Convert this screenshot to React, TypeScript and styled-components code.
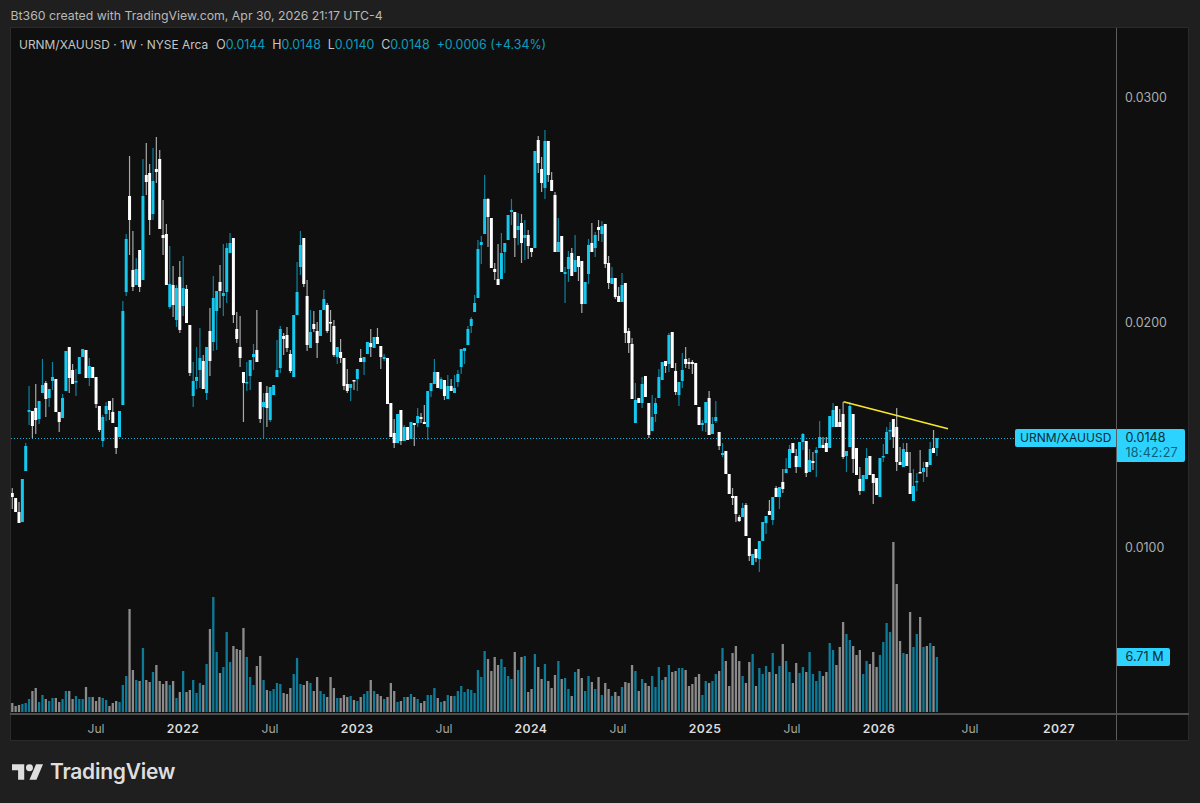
import React, { FC } from 'react';
import styled, { createGlobalStyle } from 'styled-components';

// up flag, body top, body bottom, wick top, wick bottom (page pixels)
type Candle = [number, number, number, number?, number?];

const CANDLES: Candle[] = [
  [0,493,497,488,509],[0,498,512],[0,512,523,502],[1,479,522],[1,446,471,443],
  [1,410,412,386,425],[0,411,426,411,438],[0,408,420,384,434],[1,401,419,401,424],[1,385,393,359],
  [0,383,399,381,417],[1,389,398,389,407],[1,377,381,362,390],[0,379,412],[0,412,422,412,432],
  [1,398,418,394],[1,351,391],[0,347,378,347,393],[0,370,384,364],[1,381,382,369,396],
  [1,357,374],[1,349,357],[0,350,378],[1,366,378,358,386],[0,367,378],[0,377,404,377,408],[0,406,430,406,432],
  [1,417,441,415,447],[1,406,414,402,421],[0,401,410,401,420],[0,412,423,398],[0,427,448,427,454],[1,411,437],
  [1,311,405,301],[1,239,292,234,296],[0,196,220,156,255],[0,270,287,231,291],[1,269,285,258],[0,250,287,250,292],
  [1,196,280,159],[0,175,182,143,195],[0,173,220,164,235],[1,181,214,148,220],[0,169,172,137,183],[0,159,229,150],
  [0,235,238,200,255],[0,234,285,224],[1,284,307,246,309],[0,285,305,266,317],[1,288,320,285,327],[0,277,330,261,333],
  [1,288,306,256,316],[0,289,323,285],[0,325,373,325,376],[1,381,396,362,407],[1,377,381,347,389],[1,358,370,328,388],
  [0,361,389,355],[1,347,393,347,400],[0,331,361,308,376],[1,298,342,276,351],[1,291,311,291,350],[0,282,291,265,308],
  [1,293,296,244,316],[1,248,292,243,303],[1,243,253,233],[0,238,315,238,323],[0,329,339,312,343],[0,347,358,316,367],
  [0,372,383,372,422],[1,382,383,362,391],[1,360,376,360,390],[1,354,357,344,370],[0,350,362,310],[0,382,419,382,423],
  [1,402,407,393,438],[0,393,408,386,427],[1,387,420,387,422],[1,385,395],[1,370,377,340],[1,329,368,326,373],
  [0,336,339,333,355],[0,335,348,327,352],[0,354,371,350,373],[1,315,377],[1,292,315,262],[1,245,267,231,275],
  [0,238,284,238,287],[0,296,345,280,351],[1,332,348,310],[0,324,329,311,332],[0,331,343,322,358],[1,310,336],
  [1,299,310,290],[0,305,331,303,333],[0,322,323,310,342],[0,326,355,320,357],[1,347,357,347,364],[0,352,358,339,363],
  [0,358,386,358,390],[0,384,391,369,393],[1,384,388,384,401],[0,380,381,380,390],[1,369,379,369,391],[0,358,362,349],
  [1,357,362,357,375],[1,342,354],[0,343,347,329,357],[1,337,348],[0,337,344,328],[0,346,357,346,369],[1,357,359,354,361],
  [0,358,404],[0,403,437],[0,433,443,419,448],[1,414,443],
  [0,410,441,410,445],[1,427,441,425],[0,427,440],[1,422,439],[0,423,425,423,446],[1,416,423,408,427],[0,417,419,413,423],
  [0,422,424,405],[1,391,427,391,440],[1,383,391,383,397],[1,372,384,359],[0,372,388],[1,379,389,377],[0,380,396,380,400],
  [1,386,399,375],[0,386,391,379],[1,388,393,375],[1,374,382,370,387],[1,349,367,349,374],[1,348,351,348,364],[1,329,345,326],
  [1,319,326,317,333],[1,303,312,295],[1,249,298,240],[1,242,245,236,264],[1,199,234,175],[0,199,217,198,247],[0,218,268],
  [0,269,272,263,280],[0,279,285,244],[1,253,279,233],[1,243,252,243,273],[1,215,240],[1,210,212,199,225],[0,212,238,212,257],
  [1,226,230,213,245],[0,223,243,214,263],[1,235,238,220,260],[0,235,246,230,259],[0,248,252,248,257],[1,151,248],
  [0,140,163,136,173],[0,169,183,157,192],[1,141,188,130,199],[0,141,175,141,182],[0,180,191,172],[0,195,252,192],
  [1,242,252,218],[0,236,272],[1,272,274,267,303],[1,257,269,251,282],[0,253,276,248],[1,260,272,235],[0,256,267,256,281],
  [0,261,304,261,313],[1,282,304],[1,245,274,239,284],[0,243,252,223],[1,235,248,232,257],[0,227,230,220,241],
  [1,226,234,221,242],[0,224,264,224,268],[0,263,283,256,289],[1,278,284,267],[0,278,297,278,299],[0,296,302,287],
  [1,285,302,273],[0,283,333,283,343],[0,331,343,328,353],[0,344,399,338],[1,400,423,383],[0,398,403],[1,384,403,377,408],
  [0,376,397],[0,403,435,403,438],[1,417,431,395],[1,403,414,398,422],[1,377,398,369],[1,362,380],[0,361,366,361,373],
  [1,335,364,333,372],[0,332,368],[0,371,392,363,395],[1,382,395,382,406],[1,370,381,353,388],[0,359,364,347,368],
  [0,362,364,358,369],[0,362,364,360,374],[0,363,405],[0,407,425],[1,423,425,420,431],[1,402,423,402,432],[0,398,435,391],
  [1,424,434,417],[1,417,421,401,423],[0,432,446,432,450],[1,453,455,443,457],[0,451,474],[0,474,494],[0,496,498,488,505],
  [0,496,514,496,522],[0,517,521,515,522],[1,508,517,503],[0,505,536,503],[0,538,556,538,561],[1,554,565],[0,549,558,549,562],
  [1,541,559,541,572],[1,522,541],[1,516,523,516,534],[0,511,515,500],[1,497,520,497,525],[0,488,497,486],[1,487,497,487,509],
  [0,482,489,469,493],[1,469,473,458],[1,449,468,445],[0,443,453],[0,456,467,449,473],[1,442,467],[1,434,442,433,450],
  [0,441,473,441,477],[1,460,472,449],[0,461,463,452,470],[1,450,453,447,477],[1,437,448,421],[0,445,448,437],[0,443,452,437],
  [1,416,448],[1,410,427,403],[0,406,427],[0,422,427,409],[0,414,457,402,459],[1,451,456,451,472],[1,406,447,402],
  [0,414,459,414,473],[0,448,475],[0,479,491,467,495],[1,475,491],[1,458,479,448],[0,456,475],[0,474,483,474,504],[0,478,495],
  [1,458,497],[1,456,457,444,462],[1,432,454,427],[1,430,431,422,440],[0,419,437,419,448],[0,427,462,408,471],[0,462,465,447],
  [1,449,467,443],[0,452,466,443],[0,473,494,452],[1,486,501,469],[1,481,482,473,491],[0,472,473,450],[1,468,472,462,482],
  [0,462,467,462,477],[1,449,465,442],[0,448,453,430],[1,438,448,438,456],
];

// bar heights, negative = teal (up week), positive = gray
const VOLUMES: number[] = [
  9,6,7,-8,-9,-13,21,24,-10,-17,13,-11,-14,14,10,-13,-21,21,13,-16,-13,-13,25,-15,15,11,15,-14,-12,6,9,11,-10,-27,-36,103,42,
  -32,31,-64,32,30,-40,47,31,28,31,-27,31,-14,20,-41,20,22,-32,-19,-29,27,-48,83,-115,-60,39,-45,-80,-50,66,63,62,84,-55,-35,
  -27,46,56,-32,22,-21,-23,-29,-28,19,18,24,-38,-54,-28,27,31,-29,21,35,
  -21,-18,15,35,24,-14,14,17,15,-16,12,-11,15,-18,-21,32,-21,18,16,-13,15,29,21,-10,11,-15,15,-18,15,-13,9,11,-17,-17,-24,14,
  -10,11,-17,16,-16,-21,-26,-20,-23,-22,-19,-42,-35,-61,53,41,55,47,-53,-45,-36,-33,60,-42,55,-56,20,23,-58,45,33,-48,31,24,37,
  -51,33,-34,-23,16,-40,43,34,-21,-36,30,-23,35,-17,29,23,-16,20,16,-25,30,29,47,-41,21,
  -33,29,26,-36,-25,-45,-32,35,-47,40,41,-44,-44,42,26,28,35,38,-17,-31,29,-31,-38,41,-64,51,26,59,66,51,-36,29,50,-58,26,-44,
  -38,-46,40,-59,38,-46,68,-51,-40,29,49,-39,-45,40,-60,-38,-31,-41,36,40,-69,-62,47,65,90,-78,-72,66,57,62,-38,-51,48,60,45,
  -57,-70,-89,-80,170,128,71,-59,58,100,-65,-78,95,-65,66,-69,66,-55,
];

const PRICES = [
  { label: '0.0300', y: 97 },
  { label: '0.0200', y: 322 },
  { label: '0.0100', y: 547 },
];

const TIMES = [
  { label: 'Jul', x: 96 },
  { label: '2022', x: 183, year: true },
  { label: 'Jul', x: 270 },
  { label: '2023', x: 357, year: true },
  { label: 'Jul', x: 444 },
  { label: '2024', x: 531, year: true },
  { label: 'Jul', x: 618 },
  { label: '2025', x: 705, year: true },
  { label: 'Jul', x: 792 },
  { label: '2026', x: 879, year: true },
  { label: 'Jul', x: 970 },
  { label: '2027', x: 1059, year: true },
];

const OHLC = [
  ['O', '0.0144'],
  ['H', '0.0148'],
  ['L', '0.0140'],
  ['C', '0.0148'],
];

const PLOT_LEFT = 11;
const PLOT_TOP = 28;
const BAR_STEP = 3.35;
const barX = (i: number) => 12.3 + i * BAR_STEP;

const GlobalStyle = createGlobalStyle`
  html, body { margin: 0; padding: 0; background: #1f1f1f; }
  #root { width: 1200px; height: 803px; overflow: hidden; }
`;

const Page = styled.div`
  width: 1200px;
  height: 803px;
  display: flex;
  flex-direction: column;
  background: #1f1f1f;
  font-family: Inter, 'Liberation Sans', sans-serif;
`;

const Attribution = styled.div`
  height: 27px;
  padding-left: 10.5px;
  line-height: 32px;
  font-size: 12.3px;
  white-space: nowrap;
  color: #b9b9b9;
`;

const Panel = styled.div`
  width: 1179px;
  height: 714px;
  margin-left: 10px;
  display: grid;
  grid-template-columns: 1106px 73px;
  grid-template-rows: 686px 28px;
  background: #0f0f0f;
  box-shadow: inset 0 0 0 1px #2a2a2a;
`;

const Plot = styled.div`
  position: relative;
  margin: 1px 0 0 1px;
  overflow: hidden;
`;

const ChartSvg = styled.svg`
  display: block;
`;

const Legend = styled.div`
  position: absolute;
  left: 8px;
  top: 9px;
  display: flex;
  gap: 7px;
  font-size: 12.4px;
  line-height: 15px;
  white-space: nowrap;
  color: #c4c4c4;
`;

const LegendSymbol = styled.span`
  font-size: 11.95px;
  margin-right: 1px;
`;

const LegendValue = styled.span`
  color: #0b9dbd;
`;

const PriceAxis = styled.div`
  position: relative;
  border-left: 1px solid #5c5c5c;
  margin-top: 1px;
`;

const PriceLabel = styled.span`
  position: absolute;
  left: 8px;
  transform: translateY(-50%);
  font-size: 12.4px;
  color: #adadad;
`;

const TimeAxis = styled.div`
  position: relative;
  border-top: 2px solid #4e4e4e;
`;

const TimeLabel = styled.span<{ $year?: boolean }>`
  position: absolute;
  top: 6px;
  transform: translateX(-50%);
  font-size: 12.2px;
  font-weight: ${p => (p.$year ? 600 : 400)};
  letter-spacing: ${p => (p.$year ? '0.4px' : '0')};
  color: ${p => (p.$year ? '#dcdcdc' : '#a3a3a3')};
`;

const AxisCorner = styled.div`
  border-left: 1px solid #5c5c5c;
  border-top: 2px solid #4e4e4e;
  margin-bottom: 1px;
`;

const SymbolTag = styled.div`
  position: absolute;
  right: 0;
  top: 401px;
  width: 101px;
  height: 18px;
  box-sizing: border-box;
  padding-left: 5px;
  border-radius: 2px 0 0 2px;
  background: #2cd3ff;
  color: #0c2c36;
  font-size: 12px;
  line-height: 17px;
  white-space: nowrap;
`;

const PriceTag = styled.div`
  position: absolute;
  left: 0;
  top: 401px;
  width: 68px;
  height: 33px;
  box-sizing: border-box;
  padding: 1px 0 0 8.5px;
  border-radius: 0 2px 2px 0;
  background: #2cd3ff;
  color: #0c2c36;
  font-size: 12.6px;
  line-height: 15px;
`;

const Countdown = styled.div`
  color: #0e5f75;
  letter-spacing: 0.2px;
`;

const VolumeTag = styled.div`
  position: absolute;
  left: 0;
  top: 620px;
  width: 53px;
  height: 18px;
  box-sizing: border-box;
  padding-left: 8.5px;
  border-radius: 0 2px 2px 0;
  background: #2cd3ff;
  color: #0c2c36;
  font-size: 12.6px;
  line-height: 18px;
  white-space: nowrap;
`;

const Footer = styled.div`
  display: flex;
  align-items: center;
  gap: 7px;
  height: 62px;
  padding-left: 12px;
`;

const LogoMark = styled.svg`
  display: block;
  margin-top: -1px;
`;

const Wordmark = styled.span`
  font-size: 21px;
  font-weight: 600;
  letter-spacing: -0.25px;
  margin-top: -2px;
  color: #dedede;
`;

const Candles: FC = () => (
  <>
    {CANDLES.map(([up, top, bottom, high, low], i) => {
      const x = barX(i);
      const body = up ? '#15c8ee' : '#ffffff';
      const wick = up ? '#0b829e' : '#a8a8a8';
      return (
        <g key={i}>
          <rect x={x - 0.6} y={high ?? top} width={1.2} height={(low ?? bottom) - (high ?? top)} fill={wick} />
          <rect x={x - 1.5} y={top} width={3} height={Math.max(bottom - top, 1.5)} fill={body} />
        </g>
      );
    })}
  </>
);

const Volumes: FC = () => (
  <>
    {VOLUMES.map((v, i) => (
      <rect
        key={i}
        x={barX(i) - 1.15}
        y={712 - Math.abs(v)}
        width={2.3}
        height={Math.abs(v)}
        fill={v < 0 ? '#0e7b98' : '#8b8b8b'}
      />
    ))}
  </>
);

const App: FC = () => (
  <Page>
    <GlobalStyle />
    <Attribution>Bt360 created with TradingView.com, Apr 30, 2026 21:17 UTC-4</Attribution>
    <Panel>
      <Plot>
        <ChartSvg width={1105} height={685} viewBox={`${PLOT_LEFT} ${PLOT_TOP} 1105 685`}>
          <Volumes />
          <line x1={11} y1={438.5} x2={1015} y2={438.5} stroke="#16b4d8" strokeWidth={1} strokeDasharray="1 2" />
          <Candles />
          <line x1={843.5} y1={401.7} x2={948} y2={428.7} stroke="#f7e82c" strokeWidth={1.7} />
        </ChartSvg>
        <Legend>
          <LegendSymbol>URNM/XAUUSD · 1W · NYSE Arca</LegendSymbol>
          {OHLC.map(([key, value]) => (
            <span key={key}>
              {key}
              <LegendValue>{value}</LegendValue>
            </span>
          ))}
          <LegendValue>+0.0006 (+4.34%)</LegendValue>
        </Legend>
        <SymbolTag>URNM/XAUUSD</SymbolTag>
      </Plot>
      <PriceAxis>
        {PRICES.map(p => (
          <PriceLabel key={p.label} style={{ top: p.y - PLOT_TOP }}>
            {p.label}
          </PriceLabel>
        ))}
        <PriceTag>
          0.0148
          <Countdown>18:42:27</Countdown>
        </PriceTag>
        <VolumeTag>6.71 M</VolumeTag>
      </PriceAxis>
      <TimeAxis>
        {TIMES.map(t => (
          <TimeLabel key={t.x} $year={t.year} style={{ left: t.x - 10 }}>
            {t.label}
          </TimeLabel>
        ))}
      </TimeAxis>
      <AxisCorner />
    </Panel>
    <Footer>
      <LogoMark width={31} height={16} viewBox="0 4 35.5 18">
        <path d="M14 22H7V11H0V4h14v18zM28 22h-8l7.5-18h8L28 22z" fill="#dedede" />
        <circle cx={20} cy={8} r={4} fill="#dedede" />
      </LogoMark>
      <Wordmark>TradingView</Wordmark>
    </Footer>
  </Page>
);

export default App;
